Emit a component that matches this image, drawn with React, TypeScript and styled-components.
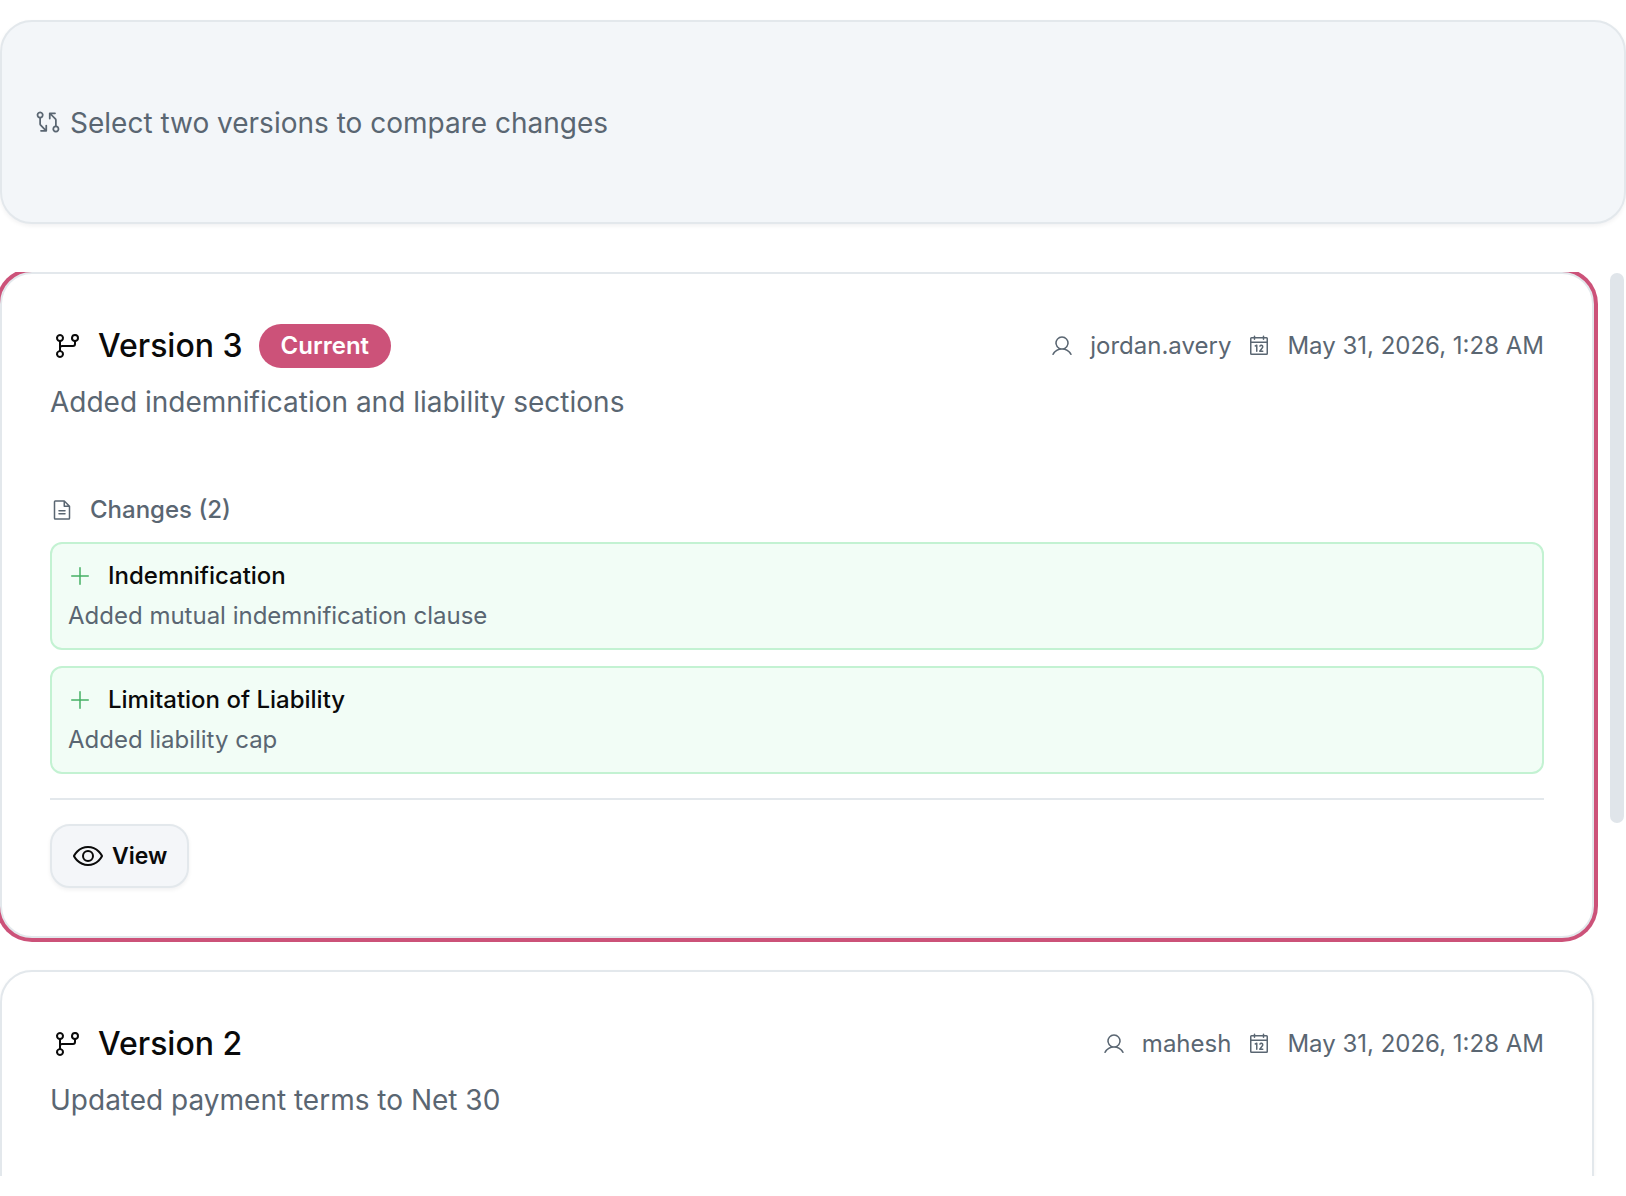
import styled, { createGlobalStyle } from 'styled-components';
import { PiCalendar, PiEye, PiFileText, PiGitBranch, PiGitDiff, PiPlus, PiUser } from 'react-icons/pi';

const GlobalStyle = createGlobalStyle`
  html, body {
    margin: 0;
    padding: 0;
    background: #fff;
    overflow: hidden;
  }
  body {
    font-family: Inter, 'Liberation Sans', sans-serif;
  }
  * {
    box-sizing: border-box;
  }
`;

type Change = { title: string; description: string };

type Version = {
  name: string;
  current?: boolean;
  author: string;
  date: string;
  summary: string;
  changes: Change[];
};

const versions: Version[] = [
  {
    name: 'Version 3',
    current: true,
    author: 'jordan.avery',
    date: 'May 31, 2026, 1:28 AM',
    summary: 'Added indemnification and liability sections',
    changes: [
      { title: 'Indemnification', description: 'Added mutual indemnification clause' },
      { title: 'Limitation of Liability', description: 'Added liability cap' },
    ],
  },
  {
    name: 'Version 2',
    author: 'mahesh',
    date: 'May 31, 2026, 1:28 AM',
    summary: 'Updated payment terms to Net 30',
    changes: [],
  },
];

const App = () => {
  return (
    <Page>
      <GlobalStyle />
      <Hint>
        <PiGitDiff size={28} />
        <HintText>Select two versions to compare changes</HintText>
      </Hint>

      <ListRow>
        <List>
          {versions.map((version) => (
            <Card key={version.name} $current={version.current}>
              <CardHeader>
                <TitleGroup>
                  <PiGitBranch size={32} color="#0a0a0a" />
                  <Title>{version.name}</Title>
                  {version.current && <Badge>Current</Badge>}
                </TitleGroup>
                <Meta>
                  <PiUser size={24} />
                  <span>{version.author}</span>
                  <PiCalendar size={24} />
                  <span>{version.date}</span>
                </Meta>
              </CardHeader>
              <Summary>{version.summary}</Summary>

              {version.changes.length > 0 && (
                <>
                  <ChangesLabel>
                    <PiFileText size={24} />
                    <span>Changes ({version.changes.length})</span>
                  </ChangesLabel>
                  <ChangeList>
                    {version.changes.map((change) => (
                      <ChangeItem key={change.title}>
                        <ChangeTitle>
                          <PiPlus size={24} color="#45b064" />
                          <span>{change.title}</span>
                        </ChangeTitle>
                        <ChangeText>{change.description}</ChangeText>
                      </ChangeItem>
                    ))}
                  </ChangeList>
                  <Actions>
                    <ViewButton>
                      <PiEye size={32} />
                      View
                    </ViewButton>
                  </Actions>
                </>
              )}
            </Card>
          ))}
        </List>
        <ScrollTrack>
          <ScrollThumb />
        </ScrollTrack>
      </ListRow>
    </Page>
  );
};

const Page = styled.div`
  width: 1626px;
  height: 1196px;
  padding-top: 20px;
  background: #fff;
`;

const Hint = styled.div`
  height: 204px;
  padding: 0 32px;
  display: flex;
  align-items: center;
  gap: 8px;
  background: #f3f6f9;
  border: 2px solid #e3e8ec;
  border-radius: 32px;
  box-shadow: 0 2px 4px rgba(15, 23, 42, 0.06);
  color: #5a6672;
  font-size: 28px;
  line-height: 40px;
`;

const HintText = styled.span`
  padding-top: 1px;
`;

const ListRow = styled.div`
  display: flex;
  margin-top: 48px;
  height: 904px;
`;

const List = styled.div`
  width: 1600px;
  height: 100%;
  overflow: hidden;
  display: flex;
  flex-direction: column;
  gap: 32px;
`;

const Card = styled.div<{ $current?: boolean }>`
  flex: none;
  width: 1594px;
  min-height: 400px;
  padding: 48px;
  background: #fff;
  border: 2px solid #e3e8ec;
  border-radius: 32px;
  box-shadow: ${(p) =>
    p.$current ? '0 0 0 4px #cc5279' : '0 2px 4px rgba(15, 23, 42, 0.05)'};
`;

const CardHeader = styled.div`
  display: flex;
  align-items: center;
  justify-content: space-between;
  height: 48px;
`;

const TitleGroup = styled.div`
  display: flex;
  align-items: center;
`;

const Title = styled.h3`
  margin: 0 0 0 16px;
  font-size: 32px;
  font-weight: 500;
  line-height: 48px;
  color: #0a0a0a;
`;

const Badge = styled.span`
  margin-left: 16px;
  height: 44px;
  padding: 0 22px 2px;
  display: inline-flex;
  align-items: center;
  border-radius: 22px;
  background: #cc5279;
  color: #fff;
  font-size: 24px;
  font-weight: 600;
`;

const Meta = styled.div`
  display: flex;
  align-items: center;
  gap: 16px;
  color: #5a6672;
  font-size: 24px;
  line-height: 32px;
`;

const Summary = styled.p`
  margin: 12px 0 0;
  font-size: 28px;
  line-height: 40px;
  color: #5a6672;
`;

const ChangesLabel = styled.div`
  margin-top: 68px;
  display: flex;
  align-items: center;
  gap: 16px;
  color: #5a6672;
  font-size: 24px;
  font-weight: 500;
  line-height: 40px;
`;

const ChangeList = styled.div`
  margin-top: 12px;
  display: flex;
  flex-direction: column;
  gap: 16px;
`;

const ChangeItem = styled.div`
  padding: 16px;
  background: #f2fdf6;
  border: 2px solid #c3f2d2;
  border-radius: 12px;
`;

const ChangeTitle = styled.div`
  display: flex;
  align-items: center;
  gap: 16px;
  font-size: 24px;
  font-weight: 500;
  line-height: 32px;
  color: #0a0a0a;
`;

const ChangeText = styled.p`
  margin: 8px 0 0;
  font-size: 24px;
  line-height: 32px;
  color: #5a6672;
`;

const Actions = styled.div`
  margin-top: 24px;
  padding-top: 24px;
  border-top: 2px solid #e3e8ec;
`;

const ViewButton = styled.button`
  height: 64px;
  padding: 0 20px;
  display: inline-flex;
  align-items: center;
  gap: 8px;
  background: #f4f6f9;
  border: 2px solid #e3e8ec;
  border-radius: 20px;
  box-shadow: 0 2px 4px rgba(15, 23, 42, 0.06);
  color: #0a0a0a;
  font-family: inherit;
  font-size: 23px;
  font-weight: 600;
`;

const ScrollTrack = styled.div`
  width: 14px;
  margin-left: 10px;
  padding-top: 1px;
`;

const ScrollThumb = styled.div`
  height: 550px;
  background: #e0e5ea;
  border-radius: 7px;
`;

export default App;
